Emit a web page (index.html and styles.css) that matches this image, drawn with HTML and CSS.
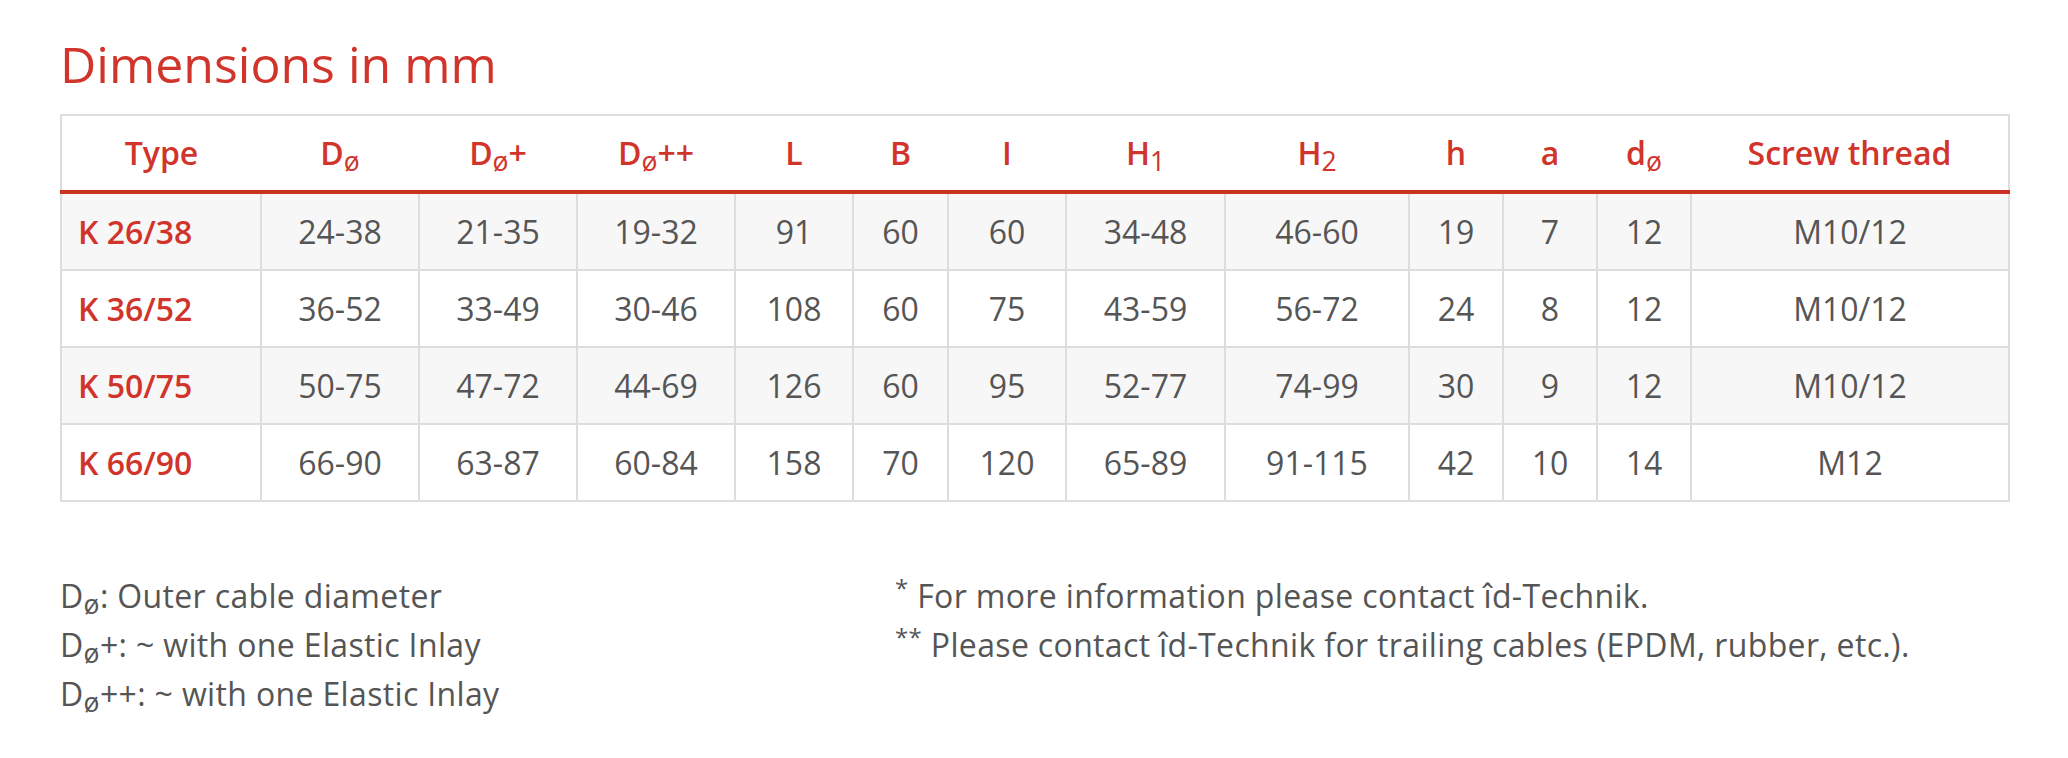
FILE: index.html
```html
<!DOCTYPE html>
<html lang="en">
<head>
<meta charset="utf-8">
<title>Dimensions in mm</title>
<link rel="stylesheet" href="styles.css">
</head>
<body>
<main class="page">
  <h2 class="title">Dimensions in mm</h2>
  <table class="dims">
    <colgroup>
      <col class="c-type"><col class="c-d"><col class="c-d"><col class="c-d"><col class="c-l"><col class="c-b"><col class="c-i"><col class="c-h1"><col class="c-h2"><col class="c-s"><col class="c-s"><col class="c-s"><col class="c-thread">
    </colgroup>
    <thead>
      <tr>
        <th>Type</th>
        <th>D<sub>ø</sub></th>
        <th>D<sub>ø</sub>+</th>
        <th>D<sub>ø</sub>++</th>
        <th>L</th>
        <th>B</th>
        <th>I</th>
        <th>H<sub>1</sub></th>
        <th>H<sub>2</sub></th>
        <th>h</th>
        <th>a</th>
        <th>d<sub>ø</sub></th>
        <th>Screw thread</th>
      </tr>
    </thead>
    <tbody>
      <tr>
        <td class="type">K 26/38</td><td>24-38</td><td>21-35</td><td>19-32</td><td>91</td><td>60</td><td>60</td><td>34-48</td><td>46-60</td><td>19</td><td>7</td><td>12</td><td>M10/12</td>
      </tr>
      <tr>
        <td class="type">K 36/52</td><td>36-52</td><td>33-49</td><td>30-46</td><td>108</td><td>60</td><td>75</td><td>43-59</td><td>56-72</td><td>24</td><td>8</td><td>12</td><td>M10/12</td>
      </tr>
      <tr>
        <td class="type">K 50/75</td><td>50-75</td><td>47-72</td><td>44-69</td><td>126</td><td>60</td><td>95</td><td>52-77</td><td>74-99</td><td>30</td><td>9</td><td>12</td><td>M10/12</td>
      </tr>
      <tr>
        <td class="type">K 66/90</td><td>66-90</td><td>63-87</td><td>60-84</td><td>158</td><td>70</td><td>120</td><td>65-89</td><td>91-115</td><td>42</td><td>10</td><td>14</td><td>M12</td>
      </tr>
    </tbody>
  </table>
  <section class="notes">
    <div class="notes-col">
      <p>D<sub>ø</sub>: Outer cable diameter</p>
      <p>D<sub>ø</sub>+: ~ with one Elastic Inlay</p>
      <p>D<sub>ø</sub>++: ~ with one Elastic Inlay</p>
    </div>
    <div class="notes-col">
      <p><sup>*</sup> For more information please contact îd-Technik.</p>
      <p><sup>**</sup> Please contact îd-Technik for trailing cables (EPDM, rubber, etc.).</p>
    </div>
  </section>
</main>
</body>
</html>
```

FILE: styles.css
```css
html, body {
  margin: 0;
  padding: 0;
  background: #ffffff;
}

body {
  font-family: "Open Sans", "Noto Sans", "Liberation Sans", sans-serif;
  font-size: 32px;
  line-height: 48px;
  color: #555555;
}

.page {
  padding: 38px 58px 0 60px;
}

.title {
  margin: 0 0 23px 0;
  font-size: 50px;
  line-height: 53px;
  font-weight: 400;
  color: #d0342a;
}

sub {
  font-size: 83%;
  line-height: 0;
  font-weight: 400;
  vertical-align: -0.22em;
}

sup {
  font-size: 75%;
  line-height: 0;
  vertical-align: 0.45em;
}

.dims {
  width: 100%;
  table-layout: fixed;
  border-collapse: collapse;
  border: 2px solid #dddddd;
  margin: 0;
}

.c-type { width: 200px; }
.c-d { width: 158px; }
.c-l { width: 118px; }
.c-b { width: 95px; }
.c-i { width: 118px; }
.c-h1 { width: 159px; }
.c-h2 { width: 184px; }
.c-s { width: 94px; }
.c-thread { width: auto; }

.dims th,
.dims td {
  padding: 14px 16px;
  line-height: 47px;
  text-align: center;
  white-space: nowrap;
}

.dims th {
  padding-top: 13px;
  font-weight: 600;
  color: #d0342a;
  border-bottom: 4px solid #cc3224;
  background: #ffffff;
}

.dims td {
  border: 2px solid #dddddd;
  color: #555555;
}

.dims td.type {
  text-align: left;
  font-weight: 600;
  color: #d0342a;
}

.dims tbody tr:nth-child(odd) td {
  background: #f7f7f7;
}

.notes {
  display: grid;
  grid-template-columns: 835px 1fr;
  margin-top: 69px;
  letter-spacing: 0.35px;
}

.notes p {
  margin: 0;
  line-height: 49px;
}
```
